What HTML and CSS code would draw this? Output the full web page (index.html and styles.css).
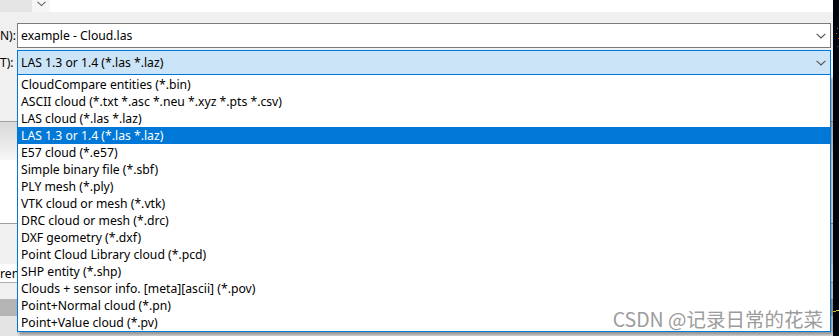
FILE: index.html
```html
<!DOCTYPE html>
<html lang="en">

<head>
    <meta charset="UTF-8">
    <title>Save file</title>
    <link rel="stylesheet" href="styles.css">
</head>

<body>
    <div class="screen">
        <div class="dialog">
            <div class="top">
                <div class="top-field"></div>
                <div class="top-drop">
                    <svg width="9" height="6" viewBox="0 0 9 6"><path d="M0.5 0.8 L4.5 4.6 L8.5 0.8" fill="none" stroke="#606060" stroke-width="1.1"/></svg>
                </div>
                <div class="top-rest"></div>
            </div>

            <div class="form">
                <div class="row">
                    <div class="label">N):</div>
                    <div class="combo">
                        <span>example - Cloud.las</span>
                        <svg width="10" height="6" viewBox="0 0 10 6"><path d="M0.6 0.8 L5 5 L9.4 0.8" fill="none" stroke="#505050" stroke-width="1.1"/></svg>
                    </div>
                </div>
                <div class="row">
                    <div class="label">T):</div>
                    <div class="combo active">
                        <span>LAS 1.3 or 1.4 (*.las *.laz)</span>
                        <svg width="10" height="6" viewBox="0 0 10 6"><path d="M0.6 0.8 L5 5 L9.4 0.8" fill="none" stroke="#505050" stroke-width="1.1"/></svg>
                    </div>
                </div>
            </div>

            <div class="behind">
                <div class="band plain"></div>
                <div class="band sep"></div>
                <div class="band fade"></div>
                <div class="band white"></div>
                <div class="band sep"></div>
                <div class="band plain short"></div>
                <div class="band field">ren</div>
                <div class="band plain thin"></div>
                <div class="band dark"></div>
                <div class="band light"></div>
            </div>

            <ul class="list">
                <li>CloudCompare entities (*.bin)</li>
                <li>ASCII cloud (*.txt *.asc *.neu *.xyz *.pts *.csv)</li>
                <li>LAS cloud (*.las *.laz)</li>
                <li class="selected">LAS 1.3 or 1.4 (*.las *.laz)</li>
                <li>E57 cloud (*.e57)</li>
                <li>Simple binary file (*.sbf)</li>
                <li>PLY mesh (*.ply)</li>
                <li>VTK cloud or mesh (*.vtk)</li>
                <li>DRC cloud or mesh (*.drc)</li>
                <li>DXF geometry (*.dxf)</li>
                <li>Point Cloud Library cloud (*.pcd)</li>
                <li>SHP entity (*.shp)</li>
                <li>Clouds + sensor info. [meta][ascii] (*.pov)</li>
                <li>Point+Normal cloud (*.pn)</li>
                <li>Point+Value cloud (*.pv)</li>
            </ul>

            <div class="watermark">CSDN @记录日常的花菜</div>
        </div>

        <div class="viewer">
            <svg width="6" height="336" viewBox="0 0 6 336">
                <rect x="4" y="28" width="1" height="1" fill="#c8501e"/>
                <rect x="3" y="33" width="1" height="1" fill="#d8602a"/>
                <rect x="5" y="38" width="1" height="1" fill="#b04018"/>
                <rect x="4" y="46" width="1" height="1" fill="#a03a14"/>
                <rect x="0" y="311" width="3" height="1" fill="#e0d020"/>
                <rect x="3" y="310" width="3" height="1" fill="#e0d020"/>
            </svg>
        </div>
    </div>
</body>

</html>
```

FILE: styles.css
```css
* {
    margin: 0;
    padding: 0;
    box-sizing: border-box;
}

body {
    width: 839px;
    height: 336px;
    overflow: hidden;
    font-family: "Noto Sans", "Noto Sans CJK SC", sans-serif;
    font-size: 12.2px;
    color: #000;
}

.screen {
    display: flex;
    width: 839px;
    height: 336px;
}

.dialog {
    width: 833px;
    height: 336px;
    background-color: #f0f0f0;
    position: relative;
    display: flex;
    flex-direction: column;
}

.viewer {
    flex: 1;
    background-color: #02060d;
}

.viewer svg {
    display: block;
}

/* strip of the field above, cut by the screenshot */
.top {
    height: 12px;
    display: flex;
}

.top-field {
    width: 32px;
    background-color: #e5e5e5;
}

.top-drop {
    width: 18px;
    background-color: #f6f6f6;
    display: flex;
    justify-content: center;
    padding-top: 1px;
}

.top-rest {
    flex: 1;
    background-color: #fff;
}

.form {
    padding: 11px 2px 0 0;
    display: flex;
    flex-direction: column;
    gap: 2px;
}

.row {
    display: flex;
    height: 25px;
}

.label {
    width: 17px;
    display: flex;
    align-items: center;
    white-space: nowrap;
    font-size: 12px;
}

.combo {
    flex: 1;
    border: 1px solid #7a7a7a;
    background-color: #fff;
    display: flex;
    align-items: center;
    justify-content: space-between;
    padding: 0 4px 0 3px;
}

.combo.active {
    border-color: #0078d7;
    background-color: #cce4f7;
}

.combo svg {
    margin-top: 1px;
}

.behind {
    display: flex;
    flex-direction: column;
    flex: 1;
}

.band.plain {
    height: 46px;
}

.band.sep {
    height: 1px;
    background-color: #a0a0a0;
}

.band.fade {
    height: 38px;
    background: linear-gradient(#d8d8d8, #f7f7f7);
}

.band.white {
    height: 63px;
    background-color: #fff;
}

.band.short {
    height: 40px;
}

.band.field {
    height: 19px;
    background-color: #fff;
    border-bottom: 1px solid #b0b0b0;
    display: flex;
    align-items: center;
    white-space: nowrap;
}

.band.thin {
    height: 16px;
}

.band.dark {
    height: 17px;
    background-color: #b4b4b4;
}

.band.light {
    flex: 1;
    background-color: #e4e4e4;
}

/* open drop-down of the type combo */
.list {
    list-style: none;
    position: absolute;
    left: 17px;
    top: 75px;
    width: 814px;
    border: 1px solid #0078d7;
    border-top: none;
    background-color: #fff;
    box-shadow: 2px 3px 3px rgba(0, 0, 0, 0.35);
    padding-top: 1px;
}

.list li {
    height: 17px;
    line-height: 17px;
    padding-left: 3px;
    white-space: nowrap;
}

.list li.selected {
    background-color: #0078d7;
    color: #fff;
}

.watermark {
    position: absolute;
    right: 10px;
    bottom: 8px;
    font-family: "Noto Sans CJK SC", sans-serif;
    font-size: 19.5px;
    line-height: 1;
    color: #9c9c9c;
    white-space: nowrap;
    text-shadow: 0 0 1px #fff;
}
```
